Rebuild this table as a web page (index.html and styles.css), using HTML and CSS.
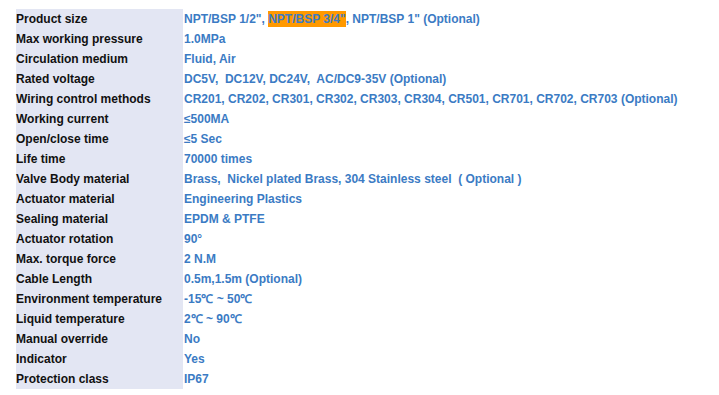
FILE: index.html
```html
<!DOCTYPE html>
<html>
<head>
<meta charset="utf-8">
<link rel="stylesheet" href="styles.css">
</head>
<body>
<div class="spec">
<table class="spec-table">
<tr><td class="k">Product size</td><td class="v">NPT/BSP 1/2", <span class="hl">NPT/BSP 3/4"</span>, NPT/BSP 1" (Optional)</td></tr>
<tr><td class="k">Max working pressure</td><td class="v">1.0MPa</td></tr>
<tr><td class="k">Circulation medium</td><td class="v">Fluid, Air</td></tr>
<tr><td class="k">Rated voltage</td><td class="v">DC5V,&nbsp; DC12V, DC24V,&nbsp; AC/DC9-35V (Optional)</td></tr>
<tr><td class="k">Wiring control methods</td><td class="v">CR201, CR202, CR301, CR302, CR303, CR304, CR501, CR701, CR702, CR703 (Optional)</td></tr>
<tr><td class="k">Working current</td><td class="v">≤500MA</td></tr>
<tr><td class="k">Open/close time</td><td class="v">≤5 Sec</td></tr>
<tr><td class="k">Life time</td><td class="v">70000 times</td></tr>
<tr><td class="k">Valve Body material</td><td class="v">Brass,&nbsp; Nickel plated Brass, 304 Stainless steel&nbsp; ( Optional )</td></tr>
<tr><td class="k">Actuator material</td><td class="v">Engineering Plastics</td></tr>
<tr><td class="k">Sealing material</td><td class="v">EPDM &amp; PTFE</td></tr>
<tr><td class="k">Actuator rotation</td><td class="v">90°</td></tr>
<tr><td class="k">Max. torque force</td><td class="v">2 N.M</td></tr>
<tr><td class="k">Cable Length</td><td class="v">0.5m,1.5m (Optional)</td></tr>
<tr><td class="k">Environment temperature</td><td class="v">-15℃ ~ 50℃</td></tr>
<tr><td class="k">Liquid temperature</td><td class="v">2℃ ~ 90℃</td></tr>
<tr><td class="k">Manual override</td><td class="v">No</td></tr>
<tr><td class="k">Indicator</td><td class="v">Yes</td></tr>
<tr><td class="k">Protection class</td><td class="v">IP67</td></tr>
</table>
</div>
</body>
</html>
```
FILE: styles.css
```css
html, body {
  margin: 0;
  padding: 0;
  background: #ffffff;
}

.spec {
  padding: 9px 0 0 16px;
}

.spec-table {
  border-collapse: collapse;
  font-family: "Liberation Sans", Arial, sans-serif;
  font-size: 12px;
  font-weight: bold;
}

.spec-table td {
  height: 20px;
  padding: 0;
  line-height: 20px;
  white-space: nowrap;
  vertical-align: middle;
}

.spec-table .k {
  width: 167px;
  background: #e3e6f3;
  color: #111111;
}

.spec-table .v {
  padding-left: 1px;
  color: #3b7bc4;
}

.hl {
  background: #ff9900;
  padding: 1px 0;
}
```
